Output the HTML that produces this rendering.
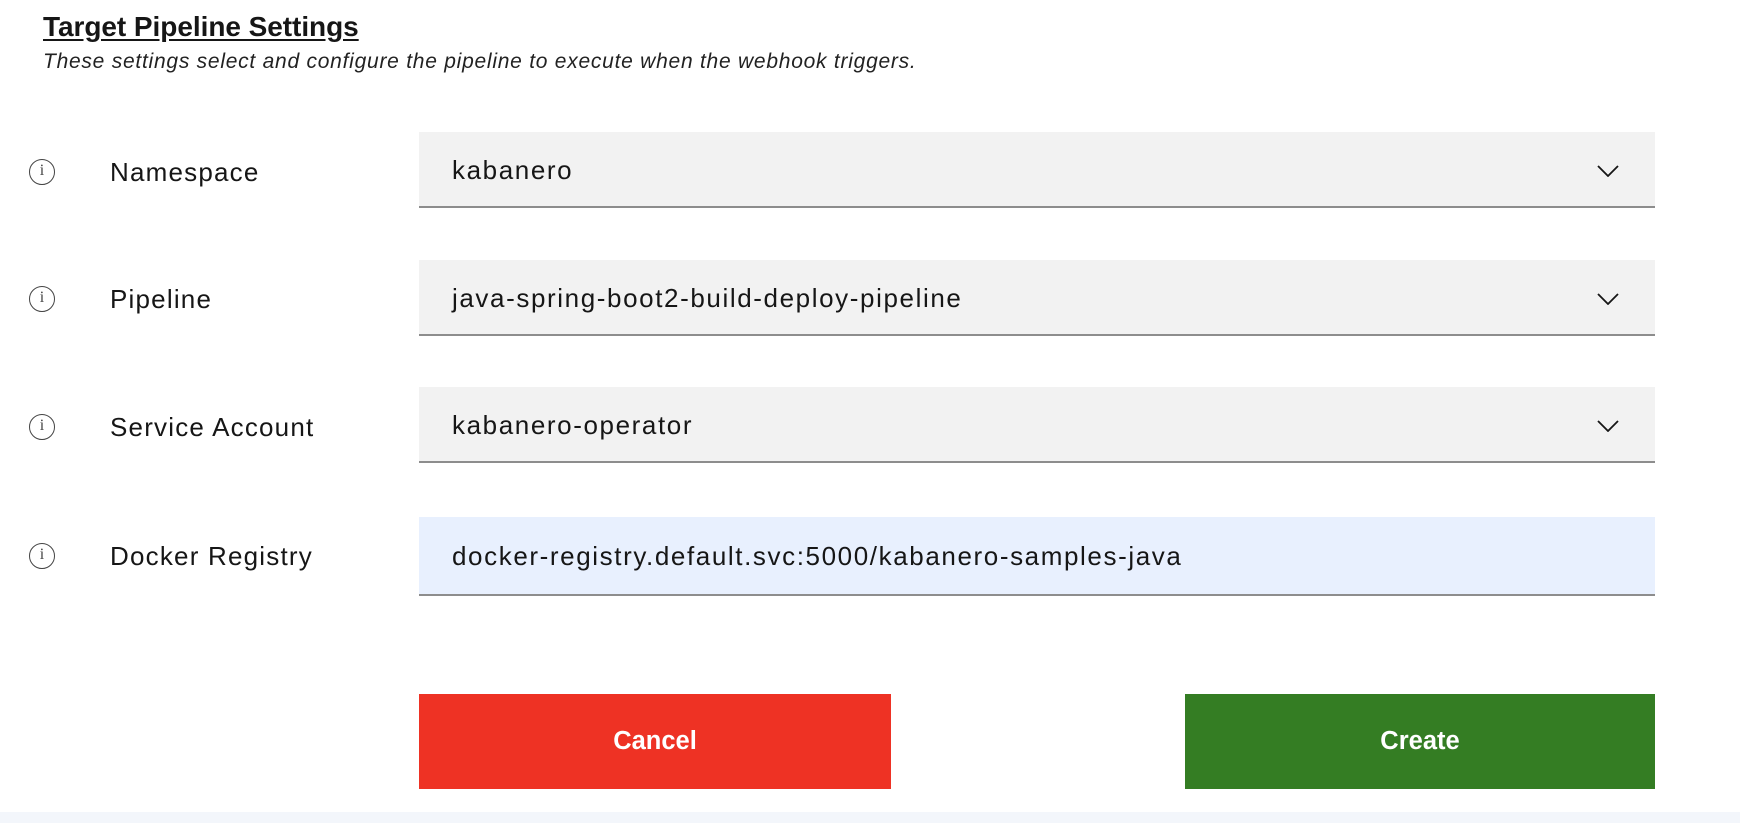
<!DOCTYPE html>
<html><head><meta charset="utf-8"><style>
body{margin:0;width:1740px;height:823px;background:#fff;position:relative;overflow:hidden;font-family:"Liberation Sans",sans-serif;color:#161616}
.t{position:absolute;left:43px;top:11px;font-size:28px;font-weight:bold;text-decoration:underline;text-underline-offset:3px;letter-spacing:-0.05px}
.s{position:absolute;left:43px;top:50px;font-size:21px;font-style:italic;color:#222;letter-spacing:0.75px}
.ic{position:absolute;left:29px;width:26px;height:26px;border:1.6px solid #444;border-radius:50%;box-sizing:border-box}
.ic:after{content:"i";position:absolute;left:0;right:0;top:2px;text-align:center;font-size:16px;font-family:"Liberation Serif",serif;color:#444}
.l{position:absolute;left:110px;font-size:26px;line-height:30px;letter-spacing:1.2px}
.f{position:absolute;left:419px;width:1236px;height:76px;background:#f2f2f2;border-bottom:2px solid #8d8d8d;box-sizing:border-box}
.f span{position:absolute;left:33px;top:23px;font-size:26px;line-height:30px;letter-spacing:1.6px}
.f svg{position:absolute;left:1178px;top:33px}
.b{position:absolute;top:694px;height:95px;color:#fff;font-weight:bold;font-size:25.5px;display:flex;align-items:center;justify-content:center}
</style></head><body>
<div class="t">Target Pipeline Settings</div>
<div class="s">These settings select and configure the pipeline to execute when the webhook triggers.</div>

<div class="ic" style="top:159px"></div><div class="l" style="top:157px">Namespace</div>
<div class="f" style="top:132px"><span>kabanero</span><svg width="22" height="12" viewBox="0 0 22 12"><path d="M1 1L11 11L21 1" fill="none" stroke="#161616" stroke-width="1.8"/></svg></div>

<div class="ic" style="top:286px"></div><div class="l" style="top:284px">Pipeline</div>
<div class="f" style="top:260px"><span>java-spring-boot2-build-deploy-pipeline</span><svg width="22" height="12" viewBox="0 0 22 12"><path d="M1 1L11 11L21 1" fill="none" stroke="#161616" stroke-width="1.8"/></svg></div>

<div class="ic" style="top:414px"></div><div class="l" style="top:412px">Service Account</div>
<div class="f" style="top:387px"><span>kabanero-operator</span><svg width="22" height="12" viewBox="0 0 22 12"><path d="M1 1L11 11L21 1" fill="none" stroke="#161616" stroke-width="1.8"/></svg></div>

<div class="ic" style="top:543px"></div><div class="l" style="top:541px">Docker Registry</div>
<div class="f" style="top:517px;height:79px;background:#e8f0fe"><span style="top:24px">docker-registry.default.svc:5000/kabanero-samples-java</span></div>

<div class="b" style="left:419px;width:472px;background:#ee3224">Cancel</div>
<div class="b" style="left:1185px;width:470px;background:#347d23">Create</div>
<div style="position:absolute;left:0;top:812px;width:1740px;height:11px;background:#f3f6fb"></div>
</body></html>
